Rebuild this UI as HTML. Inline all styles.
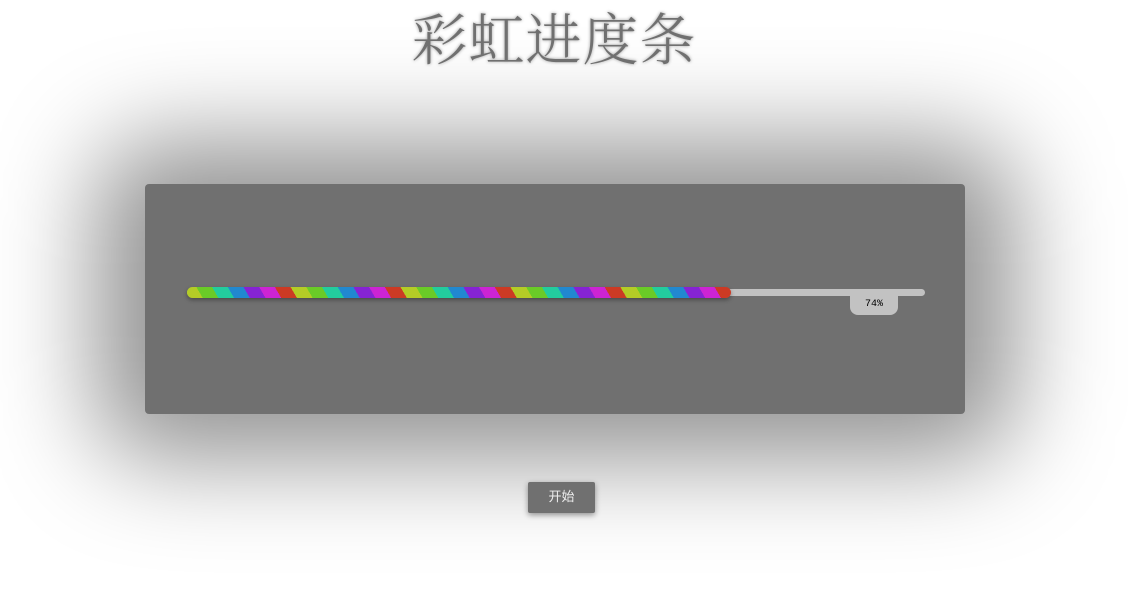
<!DOCTYPE html>
<html><head><meta charset="utf-8"><style>
html,body{margin:0;padding:0;width:1148px;height:602px;background:#fff;overflow:hidden}
h1{position:absolute;left:0;width:1108px;top:-3px;margin:0;text-align:center;font:300 56px "Noto Serif CJK SC","Liberation Serif",serif;color:#707070;text-shadow:0 0 3px #999;letter-spacing:1px;z-index:2}
.sh{position:absolute;left:95px;top:140px;width:920px;height:320px;background:rgba(0,0,0,.42);border-radius:60px;filter:blur(50px)}
.panel{position:absolute;left:145px;top:184px;width:820px;height:230px;background:#707070;border-radius:4px}
.track{position:absolute;left:42px;top:105px;width:738px;height:7px;background:#c2c2c2;border-radius:4px}
.bar{position:absolute;left:42px;top:103px;width:544px;height:11px;border-radius:6px;box-shadow:0 2px 4px rgba(0,0,0,.35);
background:repeating-linear-gradient(60deg,#b4cc26 0 13.6px,#6acb27 13.6px 27.2px,#22cc9e 27.2px 40.8px,#2188d0 40.8px 54.4px,#8623d4 54.4px 68px,#cc24d4 68px 81.6px,#cc3a24 81.6px 95.2px)}
.lab{position:absolute;left:705px;top:112px;width:48px;height:19px;background:#c2c2c2;border-radius:0 0 8px 8px;font:10px "Liberation Mono",monospace;color:#000;text-align:center;line-height:17px}
.btn{position:absolute;left:528px;top:482px;width:67px;height:31px;background:#707070;border-radius:2px;color:#eee;font:13px "Liberation Sans","Noto Sans CJK SC",sans-serif;text-align:center;line-height:30px;box-shadow:0 2px 6px rgba(0,0,0,.4)}
</style></head><body>
<div class="sh"></div>
<h1>彩虹进度条</h1>
<div class="panel"><div class="track"></div><div class="bar"></div><div class="lab">74%</div></div>
<div class="btn">开始</div>
</body></html>
